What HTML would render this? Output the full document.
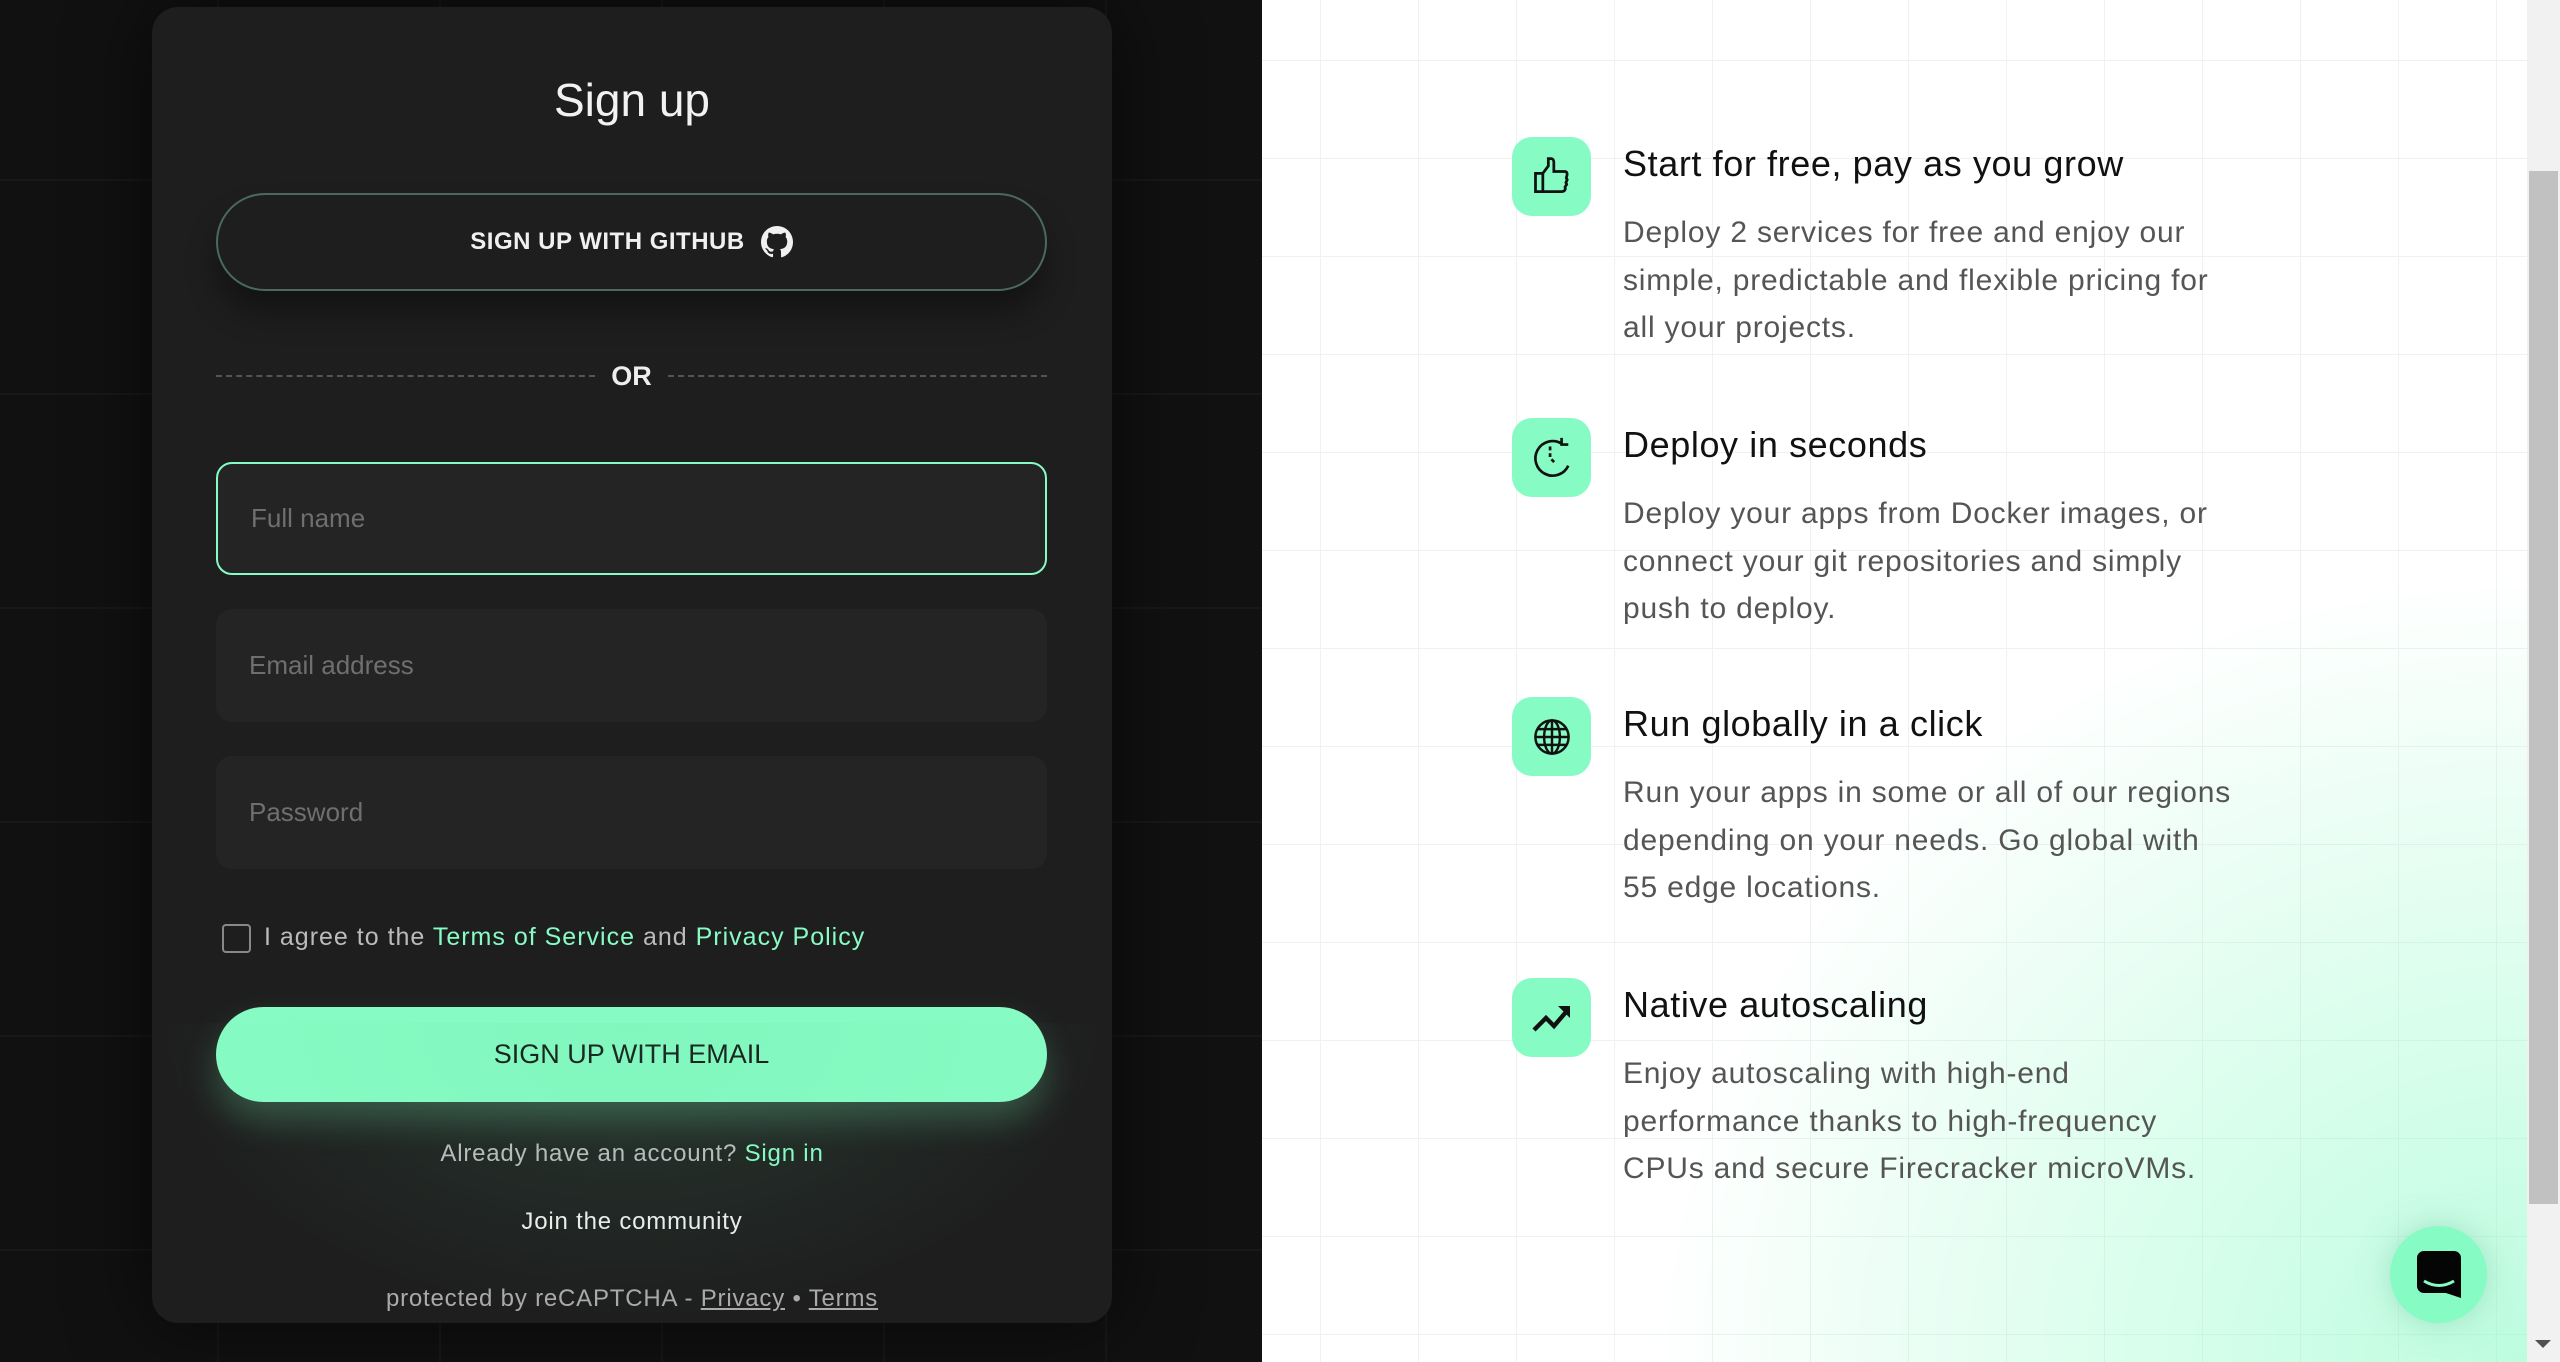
<!DOCTYPE html>
<html><head><meta charset="utf-8"><style>
*{margin:0;padding:0;box-sizing:border-box}
body{width:2560px;height:1362px;overflow:hidden;font-family:"Liberation Sans",sans-serif;position:relative;background:#fff}
.left{position:absolute;left:0;top:0;width:1262px;height:1362px;background-color:#111;
background-image:linear-gradient(#181818 2px,transparent 2px),linear-gradient(90deg,#181818 2px,transparent 2px);background-size:222px 214px;background-position:-5px -35px}
.card{position:absolute;left:152px;top:7px;width:960px;height:1316px;border-radius:26px;background:#1e1e1e;box-shadow:0 0 80px rgba(0,0,0,.6);overflow:hidden}
.card:after{content:"";position:absolute;left:0;right:0;bottom:0;height:300px;background:radial-gradient(ellipse at 50% 0%,rgba(100,220,160,.14),transparent 70%);pointer-events:none}
.title{position:absolute;left:0;width:100%;top:66px;text-align:center;color:#f2f2f2;font-size:46px}
.gh{position:absolute;left:64px;top:186px;width:831px;height:98px;border-radius:49px;border:2px solid #4a6a5c;box-shadow:0 22px 30px rgba(0,0,0,.35);display:flex;align-items:center;justify-content:center;color:#f0f0f0;font-weight:bold;font-size:24px;letter-spacing:.5px}
.gh svg{margin-left:16px}
.or{position:absolute;left:64px;top:349px;width:831px;height:40px;display:flex;align-items:center;color:#eee;font-weight:bold;font-size:27px}
.or i{flex:1;border-top:2px dashed #555}
.or span{padding:0 16px}
.in{position:absolute;left:64px;width:831px;height:113px;border-radius:16px;background:#242424;color:#6f6f6f;font-size:26px;padding-left:33px;display:flex;align-items:center}
.chk{position:absolute;left:70px;top:917px;width:29px;height:29px;border:2.5px solid #888;border-radius:4px}
.agree{position:absolute;left:112px;top:916px;color:#bbb;font-size:25px;letter-spacing:1px}
.g{color:#86fbc3}
.em{position:absolute;left:64px;top:1000px;width:831px;height:95px;border-radius:48px;background:#86fbc3;color:#111;font-size:27px;display:flex;align-items:center;justify-content:center;box-shadow:0 18px 34px rgba(120,240,180,.25)}
.c{position:absolute;left:0;width:100%;text-align:center;font-size:24px;letter-spacing:.8px}
.right{position:absolute;left:1262px;top:0;width:1265px;height:1362px;background-color:#fff;
background-image:linear-gradient(#eef2f0 1px,transparent 1px),linear-gradient(90deg,#eef2f0 1px,transparent 1px);background-size:98px 98px;background-position:58px 60px}
.glow{position:absolute;left:1262px;top:0;width:1265px;height:1362px;background:radial-gradient(ellipse 1000px 900px at 100% 100%,rgba(134,251,195,.55),rgba(134,251,195,.18) 60%,transparent 88%)}
.ic{position:absolute;left:1512px;width:79px;height:79px;border-radius:20px;background:#86fbc3;display:flex;align-items:center;justify-content:center}
.h{position:absolute;left:1623px;font-size:36px;color:#111;letter-spacing:.6px}
.p{position:absolute;left:1623px;font-size:30px;color:#555;line-height:47.6px;white-space:nowrap;letter-spacing:.8px}
.sb{position:absolute;left:2527px;top:0;width:33px;height:1362px;background:#f1f1f1}
.th{position:absolute;left:2529px;top:171px;width:29px;height:1033px;background:#c1c1c1}
.chat{position:absolute;left:2390px;top:1226px;width:97px;height:97px;border-radius:50%;background:#86fbc3;box-shadow:0 0 30px rgba(120,200,170,.5);display:flex;align-items:center;justify-content:center}
</style></head><body>
<div class="left"></div>
<div class="card">
<div class="title">Sign up</div>
<div class="gh">SIGN UP WITH GITHUB
<svg width="32" height="32" viewBox="0 0 16 16"><path fill="#f0f0f0" d="M8 0C3.58 0 0 3.58 0 8c0 3.54 2.29 6.530 5.47 7.59.4.07.55-.17.55-.38v-1.33c-2.230.48-2.7-1.07-2.7-1.07-.36-.92-.89-1.170-.89-1.170-.73-.5.06-.49.06-.49.8.06 1.23.83 1.23.83.71 1.22 1.87.87 2.33.66.07-.52.28-.87.51-1.07-1.78-.2-3.64-.89-3.64-3.95 0-.87.31-1.59.82-2.15-.08-.2-.36-1.02.08-2.12 0 0 .67-.21 2.2.82a7.6 7.6 0 0 1 4 0c1.53-1.04 2.2-.82 2.2-.82.44 1.1.16 1.92.08 2.12.51.56.82 1.27.82 2.15 0 3.07-1.87 3.75-3.65 3.95.29.25.54.73.54 1.48v2.2c0 .21.15.46.55.38A8 8 0 0 0 16 8c0-4.42-3.58-8-8-8z"/></svg></div>
<div class="or"><i></i><span>OR</span><i></i></div>
<div class="in" style="top:455px;border:2.5px solid #86fbc3">Full name</div>
<div class="in" style="top:602px">Email address</div>
<div class="in" style="top:749px">Password</div>
<div class="chk"></div>
<div class="agree">I agree to the <span class="g">Terms of Service</span> and <span class="g">Privacy Policy</span></div>
<div class="em">SIGN UP WITH EMAIL</div>
<div class="c" style="top:1133px;color:#bbb">Already have an account? <span class="g">Sign in</span></div>
<div class="c" style="top:1201px;color:#eee">Join the community</div>
<div class="c" style="top:1278px;color:#aaa">protected by reCAPTCHA - <u>Privacy</u> • <u>Terms</u></div>
</div>
<div class="right"></div>
<div class="glow"></div>

<div class="ic" style="top:137px"><svg width="44" height="44" viewBox="0 0 24 24" fill="none" stroke="#111" stroke-width="1.5"><path d="M3 10h4v10H3zM7 10l3-4V2h1.5c1 0 1.5 1 1.5 2v5h6c1 0 1.5 1 1.2 2l-.4 1.5.5 1-.7 1.5.4 1-.9 1.5.2 1c-.3 1-1 1.5-2 1.5H7"/></svg></div>
<div class="h" style="top:143px">Start for free, pay as you grow</div>
<div class="p" style="top:209px">Deploy 2 services for free and enjoy our<br>simple, predictable and flexible pricing for<br>all your projects.</div>

<div class="ic" style="top:418px"><svg width="46" height="46" viewBox="0 0 24 24" fill="none" stroke="#111" stroke-width="1.4"><path d="M17 4.5A9 9 0 1 0 20.5 16"/><path d="M17 1.5v3.5h3.5"/><path d="M11 6v6l3 3" stroke-dasharray="2 1.5"/></svg></div>
<div class="h" style="top:424px">Deploy in seconds</div>
<div class="p" style="top:490px">Deploy your apps from Docker images, or<br>connect your git repositories and simply<br>push to deploy.</div>

<div class="ic" style="top:697px"><svg width="42" height="42" viewBox="0 0 24 24" fill="none" stroke="#111" stroke-width="1.4"><circle cx="12" cy="12" r="9.5"/><ellipse cx="12" cy="12" rx="4.5" ry="9.5"/><path d="M2.5 12h19M4 7.5h16M4 16.5h16M12 2.5v19"/></svg></div>
<div class="h" style="top:703px">Run globally in a click</div>
<div class="p" style="top:769px">Run your apps in some or all of our regions<br>depending on your needs. Go global with<br>55 edge locations.</div>

<div class="ic" style="top:978px"><svg width="48" height="48" viewBox="0 0 24 24"><path d="M3 18l6-6 4 4 6-7" fill="none" stroke="#111" stroke-width="2.2"/><path d="M15 6h6v6z" fill="#111"/></svg></div>
<div class="h" style="top:984px">Native autoscaling</div>
<div class="p" style="top:1050px">Enjoy autoscaling with high-end<br>performance thanks to high-frequency<br>CPUs and secure Firecracker microVMs.</div>

<div class="sb"></div><div class="th"></div>
<svg style="position:absolute;left:2535px;top:1340px" width="16" height="10"><path d="M0 0h16L8 8z" fill="#505050"/></svg>
<div class="chat"><svg width="44" height="48" viewBox="0 0 44 48"><path d="M7 0h30a7 7 0 0 1 7 7v40l-15-5H7a7 7 0 0 1-7-7V7a7 7 0 0 1 7-7z" fill="#050505"/><path d="M7 30q15 9 30 0" fill="none" stroke="#86fbc3" stroke-width="3"/></svg></div>
</body></html>
